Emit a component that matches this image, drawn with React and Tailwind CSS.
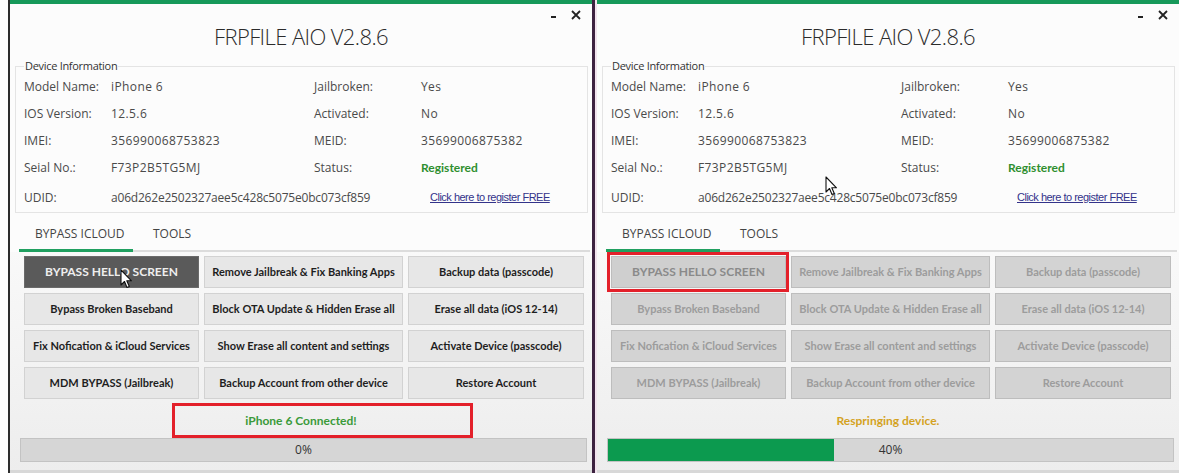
const INFO = [
  ["Model Name:", "iPhone 6", "Jailbroken:", "Yes"],
  ["IOS Version:", "12.5.6", "Activated:", "No"],
  ["IMEI:", "356990068753823", "MEID:", "35699006875382"],
  ["Seial No.:", "F73P2B5TG5MJ", "Status:", "Registered"],
];

const BUTTONS = [
  "BYPASS HELLO SCREEN",
  "Remove Jailbreak & Fix Banking Apps",
  "Backup data (passcode)",
  "Bypass Broken Baseband",
  "Block OTA Update & Hidden Erase all",
  "Erase all data (iOS 12-14)",
  "Fix Nofication & iCloud Services",
  "Show Erase all content and settings",
  "Activate Device (passcode)",
  "MDM BYPASS (Jailbreak)",
  "Backup Account from other device",
  "Restore Account",
];

function Cursor({ className }) {
  return (
    <svg className={className} width="13" height="20" viewBox="0 0 13 20">
      <path
        d="M1 1 L1 16 L4.5 12.5 L7 18.5 L9.3 17.5 L6.8 11.8 L11.5 11.8 Z"
        fill="#fff"
        stroke="#111"
        strokeWidth="1.1"
        strokeLinejoin="round"
      />
    </svg>
  );
}

function Window({ busy }) {
  return (
    <div className="relative flex h-[473px] w-[582px] flex-col bg-[#fcfcfc] font-['Open_Sans',sans-serif]">
      <div className="h-[4px] bg-[#17995a]" />

      {/* title bar */}
      <div className="relative h-[55px]">
        <div className="pt-[17px] text-center text-[22px] font-light leading-[30px] tracking-[-0.6px] text-[#2b2b2b]">
          FRPFILE AIO V2.8.6
        </div>
        <div className="absolute right-[11px] top-[6px] flex items-center gap-[15px]">
          <div className="mt-[4px] h-[2px] w-[5px] bg-[#222]" />
          <svg width="10" height="10" viewBox="0 0 10 10">
            <path d="M1 1 L9 9 M9 1 L1 9" stroke="#222" strokeWidth="1.8" />
          </svg>
        </div>
      </div>

      {/* device information */}
      <fieldset className="ml-[5px] w-[573px] border border-[#e4e4e4] pb-[1px]">
        <legend className="ml-[8px] px-[1px] text-[11px] leading-[14px] tracking-[-0.3px] text-[#333]">
          Device Information
        </legend>
        <div className="grid grid-cols-[87px_203px_107px_1fr] pl-[8px] text-[12px] text-[#4a4a4a]">
          {INFO.map((r) => (
            <div key={r[0]} className="contents">
              <div className="flex h-[27px] items-center">{r[0]}</div>
              <div className="flex h-[27px] items-center tracking-[0.4px]">{r[1]}</div>
              <div className="flex h-[27px] items-center">{r[2]}</div>
              <div
                className={
                  r[3] === "Registered"
                    ? "flex h-[27px] items-center font-['Lato',sans-serif] text-[12px] font-bold text-[#2f8f2f]"
                    : "flex h-[27px] items-center tracking-[0.4px]"
                }
              >
                {r[3]}
              </div>
            </div>
          ))}
          <div className="mt-[3px] flex h-[27px] items-center">UDID:</div>
          <div className="col-span-2 mt-[3px] flex h-[27px] items-center tracking-[-0.2px]">
            a06d262e2502327aee5c428c5075e0bc073cf859
          </div>
          <div className="mt-[3px] flex h-[27px] items-center pl-[9px]">
            <span className="font-['Liberation_Sans',sans-serif] text-[11px] tracking-[-0.5px] text-[#33338a] underline">
              Click here to register FREE
            </span>
          </div>
        </div>
      </fieldset>

      {/* tabs */}
      <div className="ml-[9px] mt-[12px] flex w-[571px] text-[12px] text-[#444]">
        <div className="flex h-[27px] w-[114px] flex-col justify-between border-b-[3px] border-[#20a060] pl-[16px] pt-[2px] leading-[14px]">
          BYPASS ICLOUD
        </div>
        <div className="flex h-[27px] flex-1 border-b-2 border-[#dcdcdc] pl-[20px] pt-[2px] leading-[14px]">
          TOOLS
        </div>
      </div>

      {/* tab page */}
      <div className="flex flex-1 flex-col bg-gradient-to-b from-[#f9f9f9] to-[#ededed] pt-[4px]">
        <div className="ml-[14px] grid grid-cols-[175px_199px_176px] gap-x-[5px] gap-y-[5px] font-['Lato',sans-serif] text-[11px] font-bold">
          {BUTTONS.map((b, i) => {
            let cls =
              "flex h-[32px] items-center justify-center border border-[#d2d2d2] bg-[#e7e7e7] text-[#1e1e1e]";
            if (i === 0 && !busy)
              cls =
                "relative flex h-[32px] items-center justify-center border border-[#6a6a6a] bg-[#5a5a5a] text-[12px] text-[#eeeeee]";
            if (busy)
              cls =
                "flex h-[32px] items-center justify-center border border-[#bdbdbd] bg-[#d3d3d3] text-[#9c9c9c]";
            if (busy && i === 0)
              cls =
                "flex h-[32px] items-center justify-center border border-[#bdbdbd] bg-[#cfcfcf] text-[12px] text-[#8a8a8a]";
            return (
              <div key={b} className={cls}>
                {b}
                {i === 0 && !busy && <Cursor className="absolute left-[95px] top-[12px]" />}
              </div>
            );
          })}
        </div>

        <div
          className={
            busy
              ? "mt-[5px] flex h-[34px] items-center justify-center font-['Lato',sans-serif] text-[12px] font-bold text-[#d4a21e]"
              : "mt-[5px] flex h-[34px] items-center justify-center font-['Lato',sans-serif] text-[12px] font-bold text-[#3a9a3a]"
          }
        >
          {busy ? "Respringing device." : "iPhone 6 Connected!"}
        </div>

        <div className="relative ml-[10px] flex h-[24px] w-[567px] items-center justify-center overflow-hidden border border-[#c3c3c3] bg-[#d6d6d6] text-[12px] text-[#333]">
          {busy && <div className="absolute inset-y-0 left-0 w-[40%] bg-[#0c9a4f]" />}
          <span className="relative">{busy ? "40%" : "0%"}</span>
        </div>
        <div className="mt-auto h-[3px] bg-[#d8d8d8]" />
      </div>

      {/* annotations */}
      {busy ? (
        <>
          <div className="absolute left-[10px] top-[252px] h-[40px] w-[182px] border-[3px] border-[#e3202a]" />
          <Cursor className="absolute left-[228px] top-[176px]" />
        </>
      ) : (
        <div className="absolute left-[162px] top-[403px] h-[35px] w-[301px] border-[3px] border-[#e3202a]" />
      )}
    </div>
  );
}

export default function App() {
  return (
    <div className="flex h-[473px] w-[1192px] overflow-hidden bg-white">
      <div className="w-[8px] bg-white" />
      <div className="border-l-2 border-[#2e2e2e]">
        <Window busy={false} />
      </div>
      <div className="w-[3px] bg-[#3d2240]" />
      <div className="w-[2px] bg-[#f2e4ee]" />
      <Window busy={true} />
      <div className="flex-1 bg-white" />
    </div>
  );
}
